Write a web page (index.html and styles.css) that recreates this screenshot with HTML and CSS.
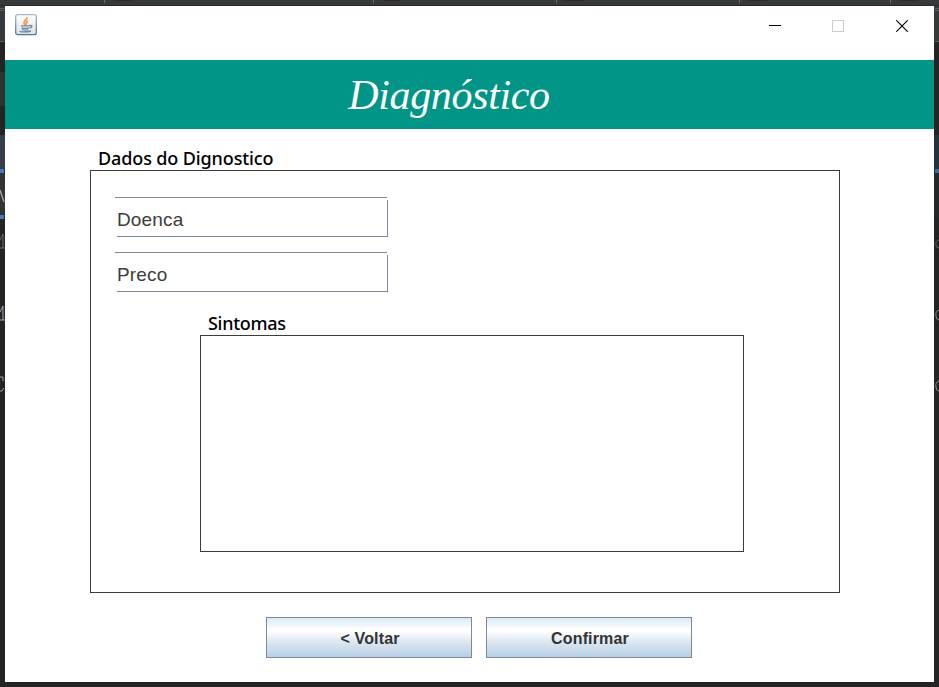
FILE: index.html
```html
<!DOCTYPE html>
<html lang="pt">
<head>
<meta charset="utf-8">
<title>Diagnóstico</title>
<link rel="stylesheet" href="styles.css">
</head>
<body>
<svg class="backdrop" width="939" height="687" shape-rendering="crispEdges" aria-hidden="true">
  <rect width="939" height="687" fill="#242424"/>
  <rect width="939" height="42" fill="#36393a"/>
  <path d="M0 5.500H939" stroke="#2a2829"/>
  <path d="M104.500 0V3M373.500 0V3M556.500 0V3M739.500 0V3M890.500 0V3" stroke="#686a6b"/>
  <path d="M114 .5H132M383 .5H401M566 .5H584M749 .5H767M900 .5H918" stroke="#2a2c2d"/>
  <path d="M0 8.500H4M0 10.500H4M0 41.500H4M935 8.500H939M935 10.500H939M935 41.500H939" stroke="#5a5c5d"/>
  <rect y="72" width="5" height="34" fill="#303233"/>
  <rect y="135" width="5" height="34" fill="#343d49"/>
  <rect y="173" width="5" height="42" fill="#313335"/>
  <rect y="169" width="4" height="4" fill="#4279b7"/>
  <rect y="215" width="4" height="4" fill="#4279b7"/>
  <rect x="934" y="135" width="5" height="34" fill="#28323d"/>
  <rect x="934" y="173" width="5" height="45" fill="#25282a"/>
  <rect x="935" y="169" width="4" height="4" fill="#3b6da5"/>
  <g fill="none" shape-rendering="auto">
    <path d="M0 190L4 202" stroke="#9b9da0" stroke-width="1.500"/>
    <path d="M0 240L3 234V248M0 248H5" stroke="#666b72"/>
    <path d="M0 312L3 306V320M0 320H5" stroke="#a0abb7"/>
    <path d="M0 377H3V381M0 391H2L4 388" stroke="#9aa4ae"/>
    <path d="M939 240Q935 240 936 245Q936 248 939 248" stroke="#55585c"/>
    <path d="M939 310Q935 311 936 316Q936 320 939 320" stroke="#769089"/>
    <path d="M939 381Q935 382 936 387Q936 391 939 391" stroke="#8a8c76"/>
  </g>
</svg>
<div class="window">
  <header class="titlebar">
    <svg class="app-icon" width="22" height="22" viewBox="0 0 22 22">
      <defs><linearGradient id="tile" x2="0" y2="1"><stop stop-color="#fff"/><stop offset="1" stop-color="#dbe1e6"/></linearGradient>
      <linearGradient id="edge" x2="0" y2="1"><stop stop-color="#a9b8c5"/><stop offset="1" stop-color="#557892"/></linearGradient></defs>
      <rect x=".7" y=".7" width="20.600" height="20" rx="2" fill="url(#tile)" stroke="url(#edge)" stroke-width="1.300"/>
      <path d="M12 3.500C12 6 8.500 6.500 9 9Q9 10 10.500 11.500M13 7Q10 8.500 12 10.500" fill="none" stroke="#ee914c" stroke-width="1.700"/>
      <path d="M6 11.800H14.500M6.500 13.800Q10 15 13.800 13.800M14.500 11.500Q18 11 16.500 13.200L14.500 14.200M7 15.500Q10 16.800 13 15.500M4.500 17.300Q10 18.500 16 17" fill="none" stroke="#6888a1" stroke-width="1.300"/>
    </svg>
    <div class="controls">
      <svg width="12" height="12" shape-rendering="crispEdges"><path d="M0 5.500H12" stroke="#000"/></svg>
      <svg width="12" height="12" shape-rendering="crispEdges"><path d="M.5 .5H11.500V11.500H.5Z" fill="none" stroke="#ccc"/></svg>
      <svg class="close" width="12" height="12"><path d="M.3 .3L11.700 11.700M11.700 .3L.3 11.700" stroke="#000" stroke-width="1.150"/></svg>
    </div>
  </header>
  <h1 class="banner">Diagnóstico</h1>
  <main class="content">
    <h2 class="label">Dados do Dignostico</h2>
    <section class="panel">
      <div class="field">Doenca</div>
      <div class="field">Preco</div>
      <h2 class="label symptoms-label">Sintomas</h2>
      <div class="symptoms"></div>
    </section>
    <div class="actions">
      <button class="button">&lt; Voltar</button>
      <button class="button">Confirmar</button>
    </div>
  </main>
</div>
</body>
</html>
```
FILE: styles.css
```css
* { box-sizing: border-box; }
body { margin: 0; width: 939px; height: 687px; overflow: hidden; background: #242424; padding: 6px 5px 5px; }
.backdrop { position: absolute; top: 0; left: 0; z-index: -1; }
.window { height: 676px; width: 929px; background: #fff; }
.titlebar { height: 54px; padding: 8px 26px 0 10px; display: flex; justify-content: space-between; align-items: flex-start; }
.titlebar svg { display: block; }
.controls { display: flex; gap: 51px; padding-top: 6px; }
.close { margin-left: 1px; }
.banner { margin: 0; height: 69px; padding: 1px 41px 0 0; background: #009587; color: #fff; font: italic 400 42px/69px "Liberation Serif", serif; letter-spacing: -0.350px; text-align: center; }
.content { padding: 19px 94px 0 85px; }
.label { margin: 0; height: 22px; padding-left: 8px; color: #000; font: 500 18px/20px "Noto Sans", sans-serif; letter-spacing: -0.120px; white-space: nowrap; }
.panel { height: 423px; border: 1px solid #3c3c3c; padding: 26px 95px 0 24px; }
.field { width: 273px; height: 40px; margin-bottom: 15px; padding-left: 2px; color: #3c3c3c; font: 19px/46px "Liberation Sans", sans-serif; letter-spacing: 0.150px; background: linear-gradient(#7a8a99, #7a8a99) 0 0 / 272px 1px no-repeat, linear-gradient(#7a8a99, #7a8a99) 2px 100% / 271px 1px no-repeat, linear-gradient(#7a8a99, #7a8a99) 100% 3px / 1px 37px no-repeat; }
.symptoms-label { margin: 21px 0 0 85px; letter-spacing: -0.300px; }
.symptoms { width: 544px; height: 217px; margin-left: 85px; border: 1px solid #3c3c3c; }
.actions { display: flex; gap: 14px; padding: 24px 0 0 176px; }
.button { width: 206px; height: 41px; padding: 2px 0 0 2px; border: 1px solid #7a8a99; border-radius: 0; background: linear-gradient(#dde8f3 0%, #fff 30%, #fff 34%, #dde8f3 60%, #b8cfe5 100%); color: #333; font: bold 16px/20px "Liberation Sans", sans-serif; letter-spacing: 0.150px; }
```
